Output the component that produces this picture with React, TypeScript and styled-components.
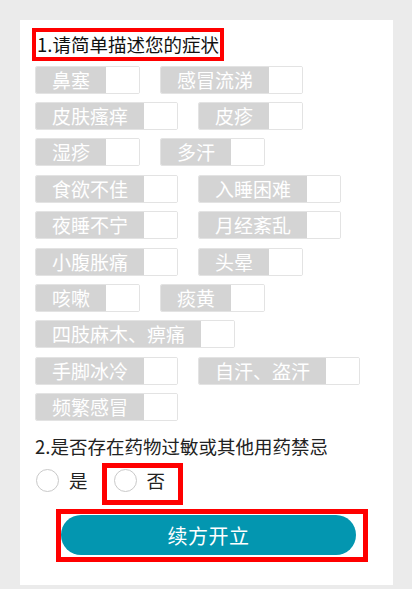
import React from 'react';
import styled, {createGlobalStyle} from 'styled-components';

const Global = createGlobalStyle`
html,body{margin:0;padding:0;background:#ebebeb;}
body{font-family:"Noto Sans CJK SC","Noto Sans",sans-serif;}
`;

const Page = styled.div`
padding:20px 19px 4px 20px;
`;
const Card = styled.div`
background:white;padding:8px 15px 23px 15px;
`;
const Title = styled.div`
display:inline-block;margin-left:-3px;padding:0 1px;border:4px solid #f00;
font-size:18.5px;line-height:25px;color:#111;
`;
const TagList = styled.div`
display:flex;flex-wrap:wrap;column-gap:20px;row-gap:8.4px;margin-top:4.7px;
`;
const Tag = styled.div`
display:flex;height:28px;box-sizing:border-box;border:1px solid #e3e3e3;border-radius:2px;overflow:hidden;
> .label{background:#d4d4d4;color:white;font-size:19px;line-height:26px;padding:0 16px;white-space:nowrap;}
> .box{width:33px;background:white;}
`;
const Question = styled.div`
margin-top:12px;font-size:18.5px;line-height:26px;color:#222;
`;
const RadioRow = styled.div`
display:flex;align-items:flex-start;margin-top:4px;
`;
const Option = styled.label<{ $marked?: boolean }>`
display:flex;align-items:center;gap:10px;font-size:18.5px;line-height:23px;color:#222;
${p => p.$marked
    ? 'margin-left:14px;border:5px solid #f00;padding:1px 13px 8px 7px;'
    : 'margin-top:6px;margin-left:1px;'}
`;
const Circle = styled.span`
width:23px;height:23px;box-sizing:border-box;border:1.5px solid #c9c9c9;border-radius:50%;
`;
const ButtonBox = styled.div`
display:inline-flex;margin:4px 0 0 21px;border:5px solid #f00;padding:1px 7px 2px 0;
`;
const Button = styled.button`
width:295px;height:40px;border:none;border-radius:20px;background:#0396b0;color:white;
font-family:inherit;font-size:20px;letter-spacing:0.5px;padding:0;
`;

const symptoms = [
  '鼻塞', '感冒流涕', '皮肤瘙痒', '皮疹', '湿疹', '多汗', '食欲不佳', '入睡困难',
  '夜睡不宁', '月经紊乱', '小腹胀痛', '头晕', '咳嗽', '痰黄', '四肢麻木、痹痛',
  '手脚冰冷', '自汗、盗汗', '频繁感冒',
];

function App() {
  return (
    <Page>
      <Global/>
      <Card>
        <Title>1.请简单描述您的症状</Title>
        <TagList>
          {symptoms.map(s =>
            <Tag key={s}>
              <span className="label">{s}</span>
              <span className="box"/>
            </Tag>
          )}
        </TagList>
        <Question>2.是否存在药物过敏或其他用药禁忌</Question>
        <RadioRow>
          <Option><Circle/>是</Option>
          <Option $marked><Circle/>否</Option>
        </RadioRow>
        <ButtonBox>
          <Button>续方开立</Button>
        </ButtonBox>
      </Card>
    </Page>
  );
}

export default App;
